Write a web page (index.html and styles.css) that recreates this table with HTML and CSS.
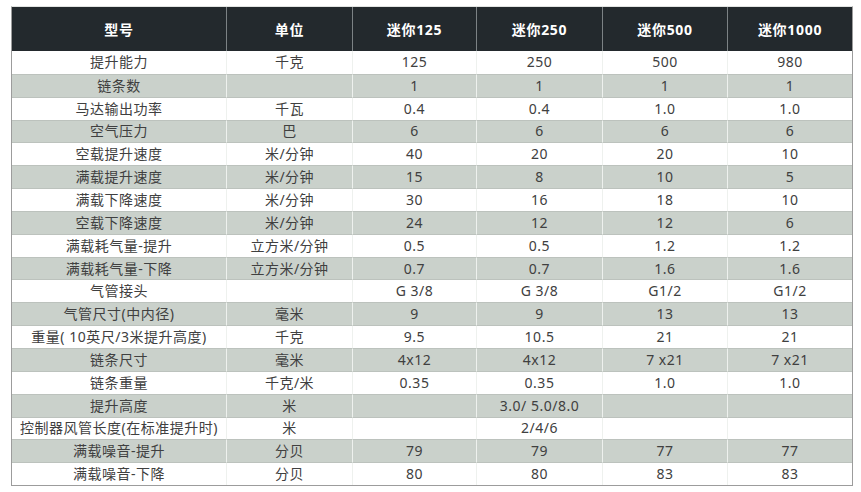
FILE: index.html
```html
<!DOCTYPE html>
<html lang="zh">
<head>
<meta charset="utf-8">
<title>规格表</title>
<link rel="stylesheet" href="styles.css">
</head>
<body>
<table class="spec">
  <colgroup>
    <col class="c1"><col class="c2"><col class="c3"><col class="c4"><col class="c5"><col class="c6">
  </colgroup>
  <thead>
    <tr><th>型号</th><th>单位</th><th>迷你125</th><th>迷你250</th><th>迷你500</th><th>迷你1000</th></tr>
  </thead>
  <tbody>
    <tr><td>提升能力</td><td>千克</td><td>125</td><td>250</td><td>500</td><td>980</td></tr>
    <tr class="alt"><td>链条数</td><td></td><td>1</td><td>1</td><td>1</td><td>1</td></tr>
    <tr><td>马达输出功率</td><td>千瓦</td><td>0.4</td><td>0.4</td><td>1.0</td><td>1.0</td></tr>
    <tr class="alt"><td>空气压力</td><td>巴</td><td>6</td><td>6</td><td>6</td><td>6</td></tr>
    <tr><td>空载提升速度</td><td>米/分钟</td><td>40</td><td>20</td><td>20</td><td>10</td></tr>
    <tr class="alt"><td>满载提升速度</td><td>米/分钟</td><td>15</td><td>8</td><td>10</td><td>5</td></tr>
    <tr><td>满载下降速度</td><td>米/分钟</td><td>30</td><td>16</td><td>18</td><td>10</td></tr>
    <tr class="alt"><td>空载下降速度</td><td>米/分钟</td><td>24</td><td>12</td><td>12</td><td>6</td></tr>
    <tr><td>满载耗气量-提升</td><td>立方米/分钟</td><td>0.5</td><td>0.5</td><td>1.2</td><td>1.2</td></tr>
    <tr class="alt"><td>满载耗气量-下降</td><td>立方米/分钟</td><td>0.7</td><td>0.7</td><td>1.6</td><td>1.6</td></tr>
    <tr><td>气管接头</td><td></td><td>G 3/8</td><td>G 3/8</td><td>G1/2</td><td>G1/2</td></tr>
    <tr class="alt"><td>气管尺寸(中内径)</td><td>毫米</td><td>9</td><td>9</td><td>13</td><td>13</td></tr>
    <tr><td>重量( 10英尺/3米提升高度)</td><td>千克</td><td>9.5</td><td>10.5</td><td>21</td><td>21</td></tr>
    <tr class="alt"><td>链条尺寸</td><td>毫米</td><td>4x12</td><td>4x12</td><td>7 x21</td><td>7 x21</td></tr>
    <tr><td>链条重量</td><td>千克/米</td><td>0.35</td><td>0.35</td><td>1.0</td><td>1.0</td></tr>
    <tr class="alt"><td>提升高度</td><td>米</td><td></td><td>3.0/ 5.0/8.0</td><td></td><td></td></tr>
    <tr><td>控制器风管长度(在标准提升时)</td><td>米</td><td></td><td>2/4/6</td><td></td><td></td></tr>
    <tr class="alt"><td>满载噪音-提升</td><td>分贝</td><td>79</td><td>79</td><td>77</td><td>77</td></tr>
    <tr><td>满载噪音-下降</td><td>分贝</td><td>80</td><td>80</td><td>83</td><td>83</td></tr>
  </tbody>
</table>
</body>
</html>
```
FILE: styles.css
```css
html, body {
  margin: 0;
  padding: 0;
  background: #ffffff;
}
body {
  padding: 6px 0 0 11px;
  font-family: "Noto Sans", "Noto Sans CJK SC", sans-serif;
}
.spec {
  border-collapse: separate;
  border-spacing: 0;
  table-layout: fixed;
  width: 842px;
  border-left: 1px solid #9c9c9c;
  border-right: 1px solid #9c9c9c;
  border-bottom: 1px solid #9c9c9c;
  border-top: 1px solid #e2e4e2;
}
.c1 { width: 215px; }
.c2 { width: 126px; }
.c3 { width: 124px; }
.c4 { width: 126px; }
.c5 { width: 125px; }
.c6 { width: 124px; }
.spec th {
  background: #23292d;
  color: #ffffff;
  font-weight: 700;
  font-size: 14px;
  letter-spacing: 0.7px;
  height: 44px;
  padding: 0;
  text-align: center;
  border-right: 1px solid #7c8285;
  box-sizing: border-box;
}
.spec td {
  height: 22.85px;
  box-sizing: border-box;
  padding: 0;
  font-size: 14px;
  letter-spacing: 0.5px;
  line-height: 20px;
  color: #404040;
  text-align: center;
  border-top: 1px solid #bcc2bd;
  border-right: 1px solid #eef1ee;
  white-space: nowrap;
}
.spec th:last-child,
.spec td:last-child {
  border-right: none;
}
.spec tbody tr:first-child td {
  border-top: none;
}
.spec tr.alt td {
  background: #cad1cb;
}
```
